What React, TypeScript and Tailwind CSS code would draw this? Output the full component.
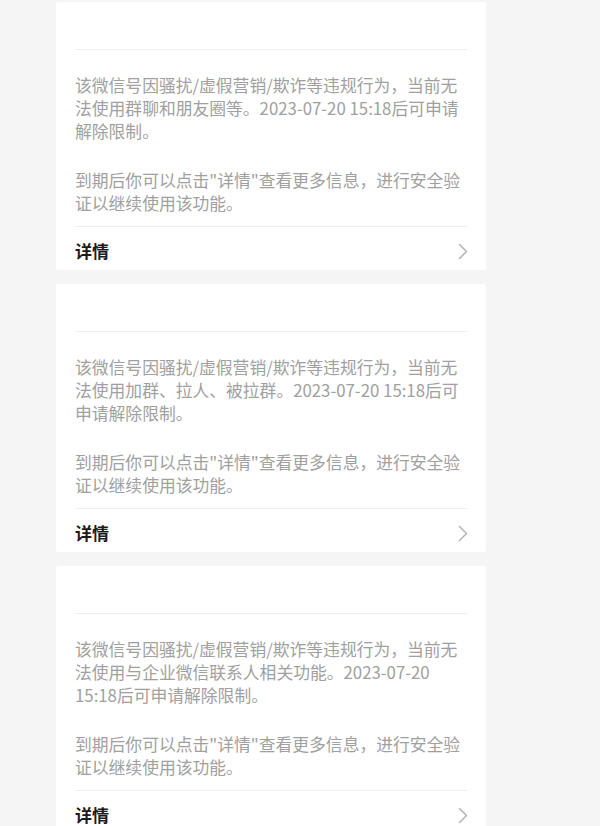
import React from "react";

type Notice = {
  id: string;
  lines: string[];
};

const notices: Notice[] = [
  {
    id: "groups",
    lines: [
      "该微信号因骚扰/虚假营销/欺诈等违规行为，当前无",
      "法使用群聊和朋友圈等。2023-07-20 15:18后可申请",
      "解除限制。",
    ],
  },
  {
    id: "invite",
    lines: [
      "该微信号因骚扰/虚假营销/欺诈等违规行为，当前无",
      "法使用加群、拉人、被拉群。2023-07-20 15:18后可",
      "申请解除限制。",
    ],
  },
  {
    id: "wework",
    lines: [
      "该微信号因骚扰/虚假营销/欺诈等违规行为，当前无",
      "法使用与企业微信联系人相关功能。2023-07-20",
      "15:18后可申请解除限制。",
    ],
  },
];

const tip = ["到期后你可以点击\"详情\"查看更多信息，进行安全验", "证以继续使用该功能。"];

function Chevron() {
  return (
    <svg width="10" height="17" viewBox="0 0 10 17" fill="none">
      <polyline points="1.5,1.5 8.5,8.5 1.5,15.5" stroke="#b4b4b4" strokeWidth="1.5" strokeLinecap="round" strokeLinejoin="round" />
    </svg>
  );
}

function NoticeCard({ notice }: { notice: Notice }) {
  return (
    <div className="w-[430px] ml-[56px] bg-white rounded-[3px] px-[19px] shrink-0">
      {/* titre masqué */}
      <div className="h-[48px] border-b border-[#eeeeee]" />

      <div className="pt-[24px] pb-[11px] border-b border-[#eeeeee] text-[16.8px] leading-[23px] text-[#a0a0a0]">
        <p>
          {notice.lines.map((l) => (
            <span key={l} className="block whitespace-nowrap">
              {l}
            </span>
          ))}
        </p>
        <p className="mt-[26px]">
          {tip.map((l) => (
            <span key={l} className="block whitespace-nowrap">
              {l}
            </span>
          ))}
        </p>
      </div>

      <div className="h-[43px] pt-[5px] flex items-center justify-between">
        <span className="text-[17px] font-bold text-[#1b1b1b]">详情</span>
        <span className="mr-[-1px]">
          <Chevron />
        </span>
      </div>
    </div>
  );
}

export default function App() {
  return (
    <div
      className="w-[600px] h-[826px] overflow-hidden bg-[#f5f5f5] pt-[2px] flex flex-col gap-[14px]"
      style={{ fontFamily: '"Noto Sans CJK SC", "Noto Sans", sans-serif' }}
    >
      {notices.map((n) => (
        <NoticeCard key={n.id} notice={n} />
      ))}
    </div>
  );
}
